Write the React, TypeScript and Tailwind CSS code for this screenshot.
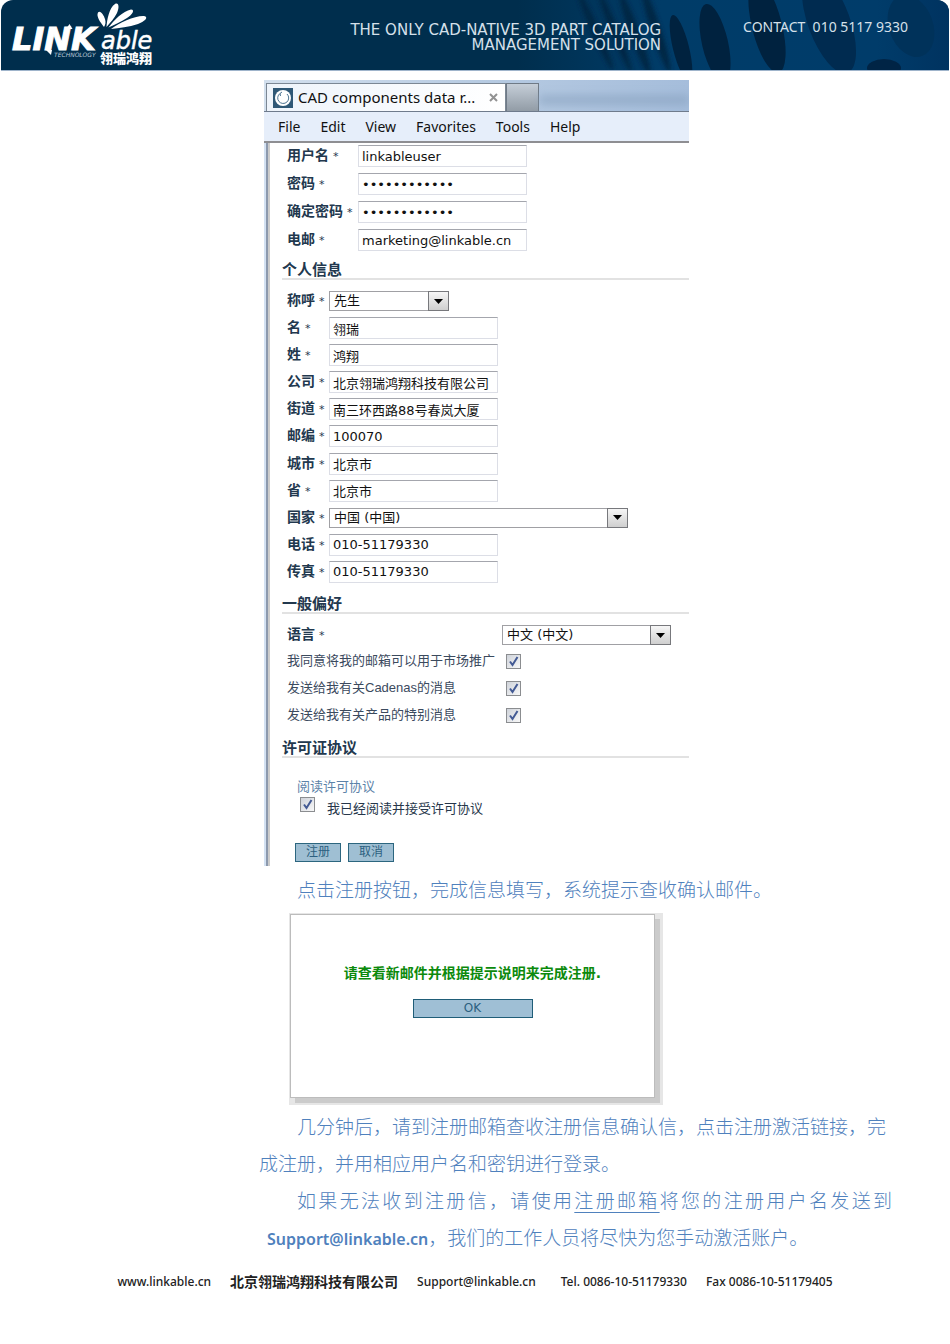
import React, { useState } from "react";

type Field = {
  id: string;
  label: string;
  value: string;
  type?: "text" | "password" | "email" | "select";
  width?: string;
};

const ACCOUNT_FIELDS: Field[] = [
  { id: "username", label: "用户名", value: "linkableuser" },
  { id: "password", label: "密码", value: "linkable2012", type: "password" },
  { id: "confirm", label: "确定密码", value: "linkable2012", type: "password" },
  { id: "email", label: "电邮", value: "marketing@linkable.cn", type: "email" },
];

const PERSONAL_FIELDS: Field[] = [
  { id: "title", label: "称呼", value: "先生", type: "select", width: "w-[120px]" },
  { id: "firstName", label: "名", value: "翎瑞" },
  { id: "lastName", label: "姓", value: "鸿翔" },
  { id: "company", label: "公司", value: "北京翎瑞鸿翔科技有限公司" },
  { id: "street", label: "街道", value: "南三环西路88号春岚大厦" },
  { id: "zip", label: "邮编", value: "100070" },
  { id: "city", label: "城市", value: "北京市" },
  { id: "province", label: "省", value: "北京市" },
  { id: "country", label: "国家", value: "中国 (中国)", type: "select", width: "w-[299px]" },
  { id: "phone", label: "电话", value: "010-51179330" },
  { id: "fax", label: "传真", value: "010-51179330" },
];

const PREFERENCES = [
  { id: "marketing", label: "我同意将我的邮箱可以用于市场推广" },
  { id: "cadenas", label: "发送给我有关Cadenas的消息" },
  { id: "products", label: "发送给我有关产品的特别消息" },
];

const MENU = ["File", "Edit", "View", "Favorites", "Tools", "Help"];

const Logo: React.FC = () => (
  <svg width="160" height="70" viewBox="0 0 160 70" role="img" aria-label="LINKable">
    <g fill="#ffffff">
      <path d="M103 27C99 22 95 16 97 12.500C99 9.500 103 15 104 19C105 22 104.500 25 103 27Z" />
      <path d="M105.500 27C106 20 108 8 114 4C118 2 118.500 8 116 13C113.500 18 109 23 105.500 27Z" />
      <path d="M107.500 27.500C113 20 122 11 130 9.500C134.500 9.500 131 15 126 18C120 22 113 25 107.500 27.500Z" />
      <path d="M110 29C118 23 134 15.500 143 16C148.500 17 143 22 137 24C128 27 118 28 110 29Z" />
      <path d="M65 29L68.500 24L71.500 29Z" />
      <path d="M45 50L50 55L51 50Z" />
      <text x="11" y="50" fontSize="32" fontWeight="700" fontStyle="italic" fontFamily="DejaVu Sans, sans-serif" stroke="#ffffff" strokeWidth="1">
        LINK
      </text>
      <text x="100" y="49" fontSize="24" fontStyle="italic" fontFamily="DejaVu Sans, sans-serif" stroke="#ffffff" strokeWidth="0.500">
        able
      </text>
      <text x="53" y="57" fontSize="6" fontStyle="italic" fontFamily="DejaVu Sans, sans-serif" fill="#b9c8d6">
        TECHNOLOGY
      </text>
      <text x="99" y="63" fontSize="13" fontWeight="900" fontFamily="Noto Sans CJK SC, sans-serif">
        翎瑞鸿翔
      </text>
    </g>
  </svg>
);

const Header: React.FC = () => (
  <header className="relative mx-px flex h-[71px] items-start overflow-hidden rounded-t-[12px] border-b border-[#9fb4cb] bg-[#002e4d]">
    <svg className="absolute top-0 right-0" width="480" height="70" viewBox="0 0 480 70" aria-hidden="true">
      <defs>
        <linearGradient id="sheen" x1="0" x2="1">
          <stop offset="0.1" stopColor="#002e4d" />
          <stop offset="0.4" stopColor="#003c68" />
          <stop offset="0.85" stopColor="#003c6a" />
          <stop offset="1" stopColor="#003360" />
        </linearGradient>
        <filter id="soft">
          <feGaussianBlur stdDeviation="2" />
        </filter>
      </defs>
      <rect width="480" height="70" fill="url(#sheen)" />
      <g fill="#002745" filter="url(#soft)">
        <ellipse cx="126" cy="30" rx="4" ry="44" transform="rotate(-24 126 30)" />
        <ellipse cx="146" cy="32" rx="4" ry="44" transform="rotate(-22 146 32)" />
        <ellipse cx="166" cy="34" rx="5" ry="44" transform="rotate(-20 166 34)" />
        <ellipse cx="187" cy="30" rx="5" ry="45" transform="rotate(-18 187 30)" />
      </g>
      <g fill="#00223f">
        <ellipse cx="212" cy="48" rx="8" ry="34" transform="rotate(-14 212 48)" />
        <ellipse cx="246" cy="43" rx="13" ry="40" transform="rotate(-13 246 43)" />
        <ellipse cx="298" cy="26" rx="15" ry="48" transform="rotate(-14 298 26)" />
        <ellipse cx="360" cy="22" rx="21" ry="54" transform="rotate(-20 360 22)" fill="#002b50" />
        <ellipse cx="442" cy="26" rx="22" ry="32" transform="rotate(-20 442 26)" fill="#00325a" />
        <ellipse cx="415" cy="68" rx="17" ry="9" fill="#002445" />
      </g>
    </svg>
    <div className="relative shrink-0">
      <Logo />
    </div>
    <p className="relative ml-auto pt-[23px] text-right font-['DejaVu_Sans',sans-serif] text-[15px] leading-[15px] text-[#d5e0ea]">
      THE ONLY CAD-NATIVE 3D PART CATALOG
      <br />
      MANAGEMENT SOLUTION
    </p>
    <p className="relative mr-[41px] ml-[82px] pt-[18px] font-['Noto_Sans',sans-serif] text-[14px] leading-[18px] whitespace-pre text-[#d5e0ea]">
      {"CONTACT  010 5117 9330"}
    </p>
  </header>
);

const SelectBox: React.FC<{ id: string; value: string; width: string }> = ({ id, value, width }) => (
  <div className={`relative h-[20px] ${width}`}>
    <select
      id={id}
      defaultValue={value}
      className="block h-full w-full appearance-none border border-[#a0a0a4] bg-white pl-[4px] text-[13px] leading-[18px] text-[#111111] outline-none"
    >
      <option>{value}</option>
    </select>
    <span className="pointer-events-none absolute top-0 right-0 flex h-[20px] w-[21px] items-center justify-center border border-[#77787c] bg-linear-to-b from-[#f6f6f6] to-[#cfcfcf]">
      <svg width="9" height="5" viewBox="0 0 9 5">
        <path d="M0 0H9L4.500 5Z" fill="#000000" />
      </svg>
    </span>
  </div>
);

const CheckBox: React.FC<{ id: string }> = ({ id }) => {
  const [checked, setChecked] = useState(true);
  return (
    <span className="relative block h-[15px] w-[15px] shrink-0">
      <input
        id={id}
        type="checkbox"
        checked={checked}
        onChange={(e) => setChecked(e.target.checked)}
        className="block h-[15px] w-[15px] appearance-none border border-[#8b8d90] bg-linear-to-br from-[#cfd3da] to-[#f8f8f8]"
      />
      {checked && (
        <svg className="pointer-events-none absolute inset-0" width="15" height="15" viewBox="0 0 15 15" fill="none">
          <path d="M4 7.500L6.500 11L11.500 3" stroke="#435a94" strokeWidth="2" />
        </svg>
      )}
    </span>
  );
};

const FieldLabel: React.FC<{ id: string; className?: string; children: React.ReactNode }> = ({ id, className, children }) => (
  <label htmlFor={id} className={`shrink-0 text-[14px] leading-[20px] font-bold whitespace-nowrap text-[#22384e] ${className ?? ""}`}>
    {children}
    <span className="ml-[4px] text-[11px] font-normal">*</span>
  </label>
);

const FieldRow: React.FC<{ field: Field; labelWidth: string }> = ({ field, labelWidth }) => (
  <div className="flex items-center">
    <FieldLabel id={field.id} className={labelWidth}>
      {field.label}
    </FieldLabel>
    {field.type === "select" ? (
      <SelectBox id={field.id} value={field.value} width={field.width ?? "w-[169px]"} />
    ) : (
      <input
        id={field.id}
        type={field.type ?? "text"}
        defaultValue={field.value}
        className="h-[22px] w-[169px] border border-[#dcdee6] border-t-[#a4a6ad] bg-white px-[3px] text-[13px] leading-[18px] text-[#111111] outline-none"
      />
    )}
  </div>
);

const SectionTitle: React.FC<{ children: React.ReactNode }> = ({ children }) => (
  <h2 className="ml-[12px] border-b-2 border-[#e2e2e2] pt-[4px] text-[15px] leading-[15px] font-bold text-[#22384e]">{children}</h2>
);

const BrowserWindow: React.FC = () => (
  <section className="ml-[5px] max-w-[425px] font-['DejaVu_Sans','Noto_Sans_CJK_SC',sans-serif] font-normal">
    <div className="flex h-[31px] items-end overflow-hidden bg-linear-to-r from-[#d3e0ee] via-[#b7cbe2] to-[#a5bddb] pl-[2px]">
      <div className="flex h-[28px] w-[240px] items-center border border-b-0 border-[#7b8794] bg-linear-to-r from-[#eef4fb] to-white pl-[6px] font-['Noto_Sans',sans-serif] text-[15px] text-[#111111]">
        <svg width="20" height="20" viewBox="0 0 20 20" aria-hidden="true">
          <rect width="20" height="20" fill="#2f5876" />
          <circle cx="10" cy="10" r="8" fill="#ffffff" />
          <path d="M7 5.500A5.500 5.500 0 1 0 14 6M7 5.500L9 4M7 5.500L7.500 8" fill="none" stroke="#4d7592" strokeWidth="1" />
        </svg>
        <span className="ml-[5px] whitespace-nowrap">CAD components data r...</span>
        <button type="button" aria-label="Close tab" className="mr-[7px] ml-auto">
          <svg width="9" height="9" viewBox="0 0 9 9">
            <path d="M1 1L8 8M8 1L1 8" stroke="#929292" strokeWidth="2" />
          </svg>
        </button>
      </div>
      <button type="button" aria-label="New tab" className="h-[28px] w-[33px] border border-b-0 border-[#6f7a86] bg-linear-to-b from-[#c5ced8] to-[#929ca6]" />
      <div className="mt-[8px] h-[10px] min-w-0 flex-1 self-center bg-[#819bb9] opacity-50 blur-[4px]" />
    </div>
    <nav className="flex h-[32px] items-center gap-[20px] border-t border-b-2 border-[#6f7b8c] border-b-[#8e8e92] bg-[#e6eefa] pl-[14px] font-['Noto_Sans',sans-serif] text-[14px] text-[#111111]">
      {MENU.map((item) => (
        <button key={item} type="button">
          {item}
        </button>
      ))}
    </nav>

    <div className="border-l-2 border-[#d3e1f2]">
      <form onSubmit={(e) => e.preventDefault()} className="border-l-2 border-[#8c99ad] pt-[2px] pb-[4px] pl-[2px] shadow-[inset_2px_0_0_#cbcbcb]">
        <div className="flex flex-col gap-[6px] pl-[17px]">
          {ACCOUNT_FIELDS.map((f) => (
            <FieldRow key={f.id} field={f} labelWidth="w-[71px]" />
          ))}
        </div>

        <div className="mt-[8px]">
          <SectionTitle>个人信息</SectionTitle>
        </div>
        <div className="mt-[10px] flex min-h-[293px] flex-col justify-between pl-[17px]">
          {PERSONAL_FIELDS.map((f) => (
            <FieldRow key={f.id} field={f} labelWidth="w-[42px]" />
          ))}
        </div>

        <div className="mt-[10px]">
          <SectionTitle>一般偏好</SectionTitle>
        </div>
        <div className="mt-[10px] flex items-center pl-[17px]">
          <FieldLabel id="language" className="w-[215px]">语言</FieldLabel>
          <SelectBox id="language" value="中文 (中文)" width="w-[169px]" />
        </div>
        <div className="mt-[5px] flex flex-col gap-[7px] pl-[17px]">
          {PREFERENCES.map((p) => (
            <div key={p.id} className="flex items-center">
              <label htmlFor={p.id} className="w-[219px] shrink-0 font-['Liberation_Sans','Noto_Sans_CJK_SC',sans-serif] text-[13px] leading-[20px] whitespace-nowrap text-[#3b4a5e]">
                {p.label}
              </label>
              <CheckBox id={p.id} />
            </div>
          ))}
        </div>

        <div className="mt-[12px]">
          <SectionTitle>许可证协议</SectionTitle>
        </div>
        <div className="mt-[19px] pl-[27px] text-[13px] leading-[20px]">
          <a href="#license" className="block w-fit text-[#5c82a8]">
            阅读许可协议
          </a>
          <div className="flex items-start pl-[3px]">
            <CheckBox id="accept" />
            <label htmlFor="accept" className="ml-[12px] pt-[2px] text-[#26364a]">
              我已经阅读并接受许可协议
            </label>
          </div>
        </div>
        <div className="mt-[24px] flex gap-[7px] pl-[25px]">
          <button type="submit" className="h-[19px] w-[46px] border border-[#2c667f] bg-[#9fbfd3] text-[12px] leading-[17px] text-[#2c5f80]">
            注册
          </button>
          <button type="button" className="h-[19px] w-[46px] border border-[#2c667f] bg-[#9fbfd3] text-[12px] leading-[17px] text-[#2c5f80]">
            取消
          </button>
        </div>
      </form>
    </div>
  </section>
);

const ConfirmDialog: React.FC = () => (
  <div className="ml-[30px] max-w-[374px] bg-[#e6e6e6] pt-px pr-[8px] pb-[7px] pl-px">
    <div className="flex min-h-[184px] flex-col items-center border border-[#bcbcbc] bg-white pt-[47px] font-['DejaVu_Sans','Noto_Sans_CJK_SC',sans-serif] font-normal shadow-[5px_5px_0_#cbcbcb]">
      <p className="text-[14px] leading-[22px] font-bold text-[#0c8a0c]">请查看新邮件并根据提示说明来完成注册.</p>
      <button type="button" className="mt-[15px] h-[19px] w-[120px] border border-[#1f5d78] bg-[#9fbfd5] text-[12px] leading-[17px] text-[#2c5f80]">
        OK
      </button>
    </div>
  </div>
);

export default function App() {
  return (
    <div className="bg-white pb-[52px]">
      <Header />
      <main className="mt-[9px] mr-[58px] ml-[259px] font-['Noto_Sans','Noto_Sans_CJK_SC',sans-serif] text-[19px] leading-[37px] font-light text-[#4f81bd]">
        <BrowserWindow />
        <p className="mt-[6px] indent-[38px]">点击注册按钮，完成信息填写，系统提示查收确认邮件。</p>
        <div className="mt-[4px] mb-[4px]">
          <ConfirmDialog />
        </div>
        <p className="indent-[38px]">几分钟后，请到注册邮箱查收注册信息确认信，点击注册激活链接，完成注册，并用相应用户名和密钥进行登录。</p>
        <p className="text-justify indent-[38px]">
          如果无法收到注册信，请使用
          <a href="#mailbox" className="underline underline-offset-4">注册邮箱</a>
          将您的注册用户名发送到
          <a href="mailto:Support@linkable.cn" className="ml-[8px] text-[16px] font-semibold">Support@linkable.cn</a>
          ，我们的工作人员将尽快为您手动激活账户。
        </p>
      </main>
      <footer className="mt-[13px] flex items-center justify-center gap-[19px] font-['Noto_Sans','Noto_Sans_CJK_SC',sans-serif] text-[12px] leading-[22px] font-medium whitespace-nowrap text-[#222222]">
        <a href="#home">www.linkable.cn</a>
        <span className="text-[14px] font-bold">北京翎瑞鸿翔科技有限公司</span>
        <a href="mailto:Support@linkable.cn">Support@linkable.cn</a>
        <span className="ml-[6px]">Tel. 0086-10-51179330</span>
        <span>Fax 0086-10-51179405</span>
      </footer>
    </div>
  );
}
